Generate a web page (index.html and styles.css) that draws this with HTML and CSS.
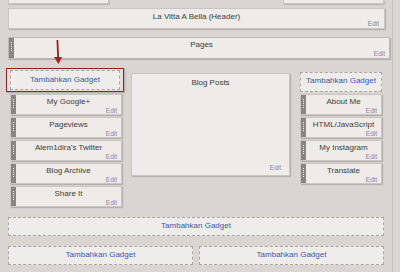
FILE: index.html
```html
<!DOCTYPE html>
<html lang="en">
<head>
    <meta charset="UTF-8">
    <title>Layout</title>
    <link rel="stylesheet" href="styles.css">
</head>
<body>
<div class="page">
    <div class="top-row">
        <div class="stub"></div>
        <div class="stub"></div>
    </div>

    <div class="widget header">
        <div class="body">
            <span class="label">La Vitta A Bella (Header)</span>
            <span class="edit">Edit</span>
        </div>
    </div>

    <div class="widget pages">
        <div class="grip"></div>
        <div class="body">
            <span class="label">Pages</span>
            <span class="edit">Edit</span>
        </div>
    </div>

    <div class="main">
        <div class="col left">
            <div class="picked">
                <div class="add">Tambahkan Gadget</div>
            </div>
            <div class="widget side"><div class="grip"></div><div class="body"><span class="label">My Google+</span><span class="edit">Edit</span></div></div>
            <div class="widget side"><div class="grip"></div><div class="body"><span class="label">Pageviews</span><span class="edit">Edit</span></div></div>
            <div class="widget side"><div class="grip"></div><div class="body"><span class="label">Alem1dira's Twitter</span><span class="edit">Edit</span></div></div>
            <div class="widget side"><div class="grip"></div><div class="body"><span class="label">Blog Archive</span><span class="edit">Edit</span></div></div>
            <div class="widget side"><div class="grip"></div><div class="body"><span class="label">Share It</span><span class="edit">Edit</span></div></div>
        </div>

        <div class="col center">
            <div class="widget posts">
                <div class="body">
                    <span class="label">Blog Posts</span>
                    <span class="edit">Edit</span>
                </div>
            </div>
        </div>

        <div class="col right">
            <div class="add">Tambahkan Gadget</div>
            <div class="widget side"><div class="grip"></div><div class="body"><span class="label">About Me</span><span class="edit">Edit</span></div></div>
            <div class="widget side"><div class="grip"></div><div class="body"><span class="label">HTML/JavaScript</span><span class="edit">Edit</span></div></div>
            <div class="widget side"><div class="grip"></div><div class="body"><span class="label">My Instagram</span><span class="edit">Edit</span></div></div>
            <div class="widget side"><div class="grip"></div><div class="body"><span class="label">Translate</span><span class="edit">Edit</span></div></div>
        </div>
    </div>

    <div class="add wide">Tambahkan Gadget</div>

    <div class="halves">
        <div class="add">Tambahkan Gadget</div>
        <div class="add">Tambahkan Gadget</div>
    </div>

    <!-- panah merah -->
    <svg class="arrow" width="14" height="26" viewBox="0 0 14 26">
        <path d="M6.4 0 L7.2 19" stroke="#a81c1c" stroke-width="1.8" fill="none"/>
        <path d="M3 17 L11 17 L7.5 24 Z" fill="#a81c1c"/>
    </svg>
</div>
</body>
</html>
```

FILE: styles.css
```css
html,
body{
    margin:0;
    background:#d9d5d1;
    font-family:'Liberation Sans', Arial, sans-serif;
    color:#3a3a3a;
}

.page{
    position:relative;
    width:392px;
    height:272px;
    border-right:1px solid #c4c0bc;
    overflow:hidden;
}

/* baris atas */
.top-row{
    display:flex;
    justify-content:space-between;
    padding:0 8px 0 8px;
    width:376px;
}
.stub{
    width:99px;
    height:3px;
    background:#eeebe8;
    border:1px solid #c6c2be;
    border-top:none;
    box-shadow:1px 1px 1px #b9b5b0;
}

/* widget umum */
.widget{
    display:flex;
    background:#eeebe8;
    border:1px solid #c9c5c1;
    box-shadow:1px 1px 1px #b5b1ac;
}
.widget .body{
    flex:1;
    position:relative;
    text-align:center;
}
.label{
    display:block;
    font-size:8px;
    line-height:9px;
    padding-top:2px;
    color:#3c3c3c;
}
.edit{
    position:absolute;
    right:5px;
    bottom:1px;
    font-size:6.5px;
    line-height:7px;
    color:#7d89ad;
}
.grip{
    position:relative;
    width:5px;
    background:#8a8580;
}
.grip::after{
    content:'';
    position:absolute;
    left:2px;
    top:4px;
    height:9px;
    border-left:1px dotted #efece9;
}

.header{
    margin:4px 0 0 8px;
    width:375px;
    height:19px;
}
.header .label{
    padding-top:3px;
}

.pages{
    margin:8px 0 0 8px;
    width:380px;
    height:20px;
    border-color:#bcb8b4;
}
.pages .edit{
    right:4px;
}

/* tiga kolom */
.main{
    display:flex;
    margin-top:9px;
    padding-left:6px;
}
.col{
    display:flex;
    flex-direction:column;
    gap:2px;
}
.left{
    width:118px;
}
.left .side{
    margin:0 2px 0 4px;
}
.center{
    width:159px;
    margin-left:7px;
    padding-top:5px;
}
.right{
    width:82px;
    margin-left:10px;
    padding-top:4px;
}
.side{
    height:19px;
}
.side .edit{
    right:4px;
    bottom:0;
}
.posts{
    height:101px;
}
.posts .label{
    padding-top:4px;
}
.posts .edit{
    right:8px;
    bottom:4px;
}

/* tambah gadget */
.add{
    background:#efedeb;
    border:1px dashed #a9a6a2;
    color:#3b58a3;
    font-size:8px;
    line-height:9px;
    text-align:center;
    padding-top:3px;
    height:15px;
    box-sizing:content-box;
}
.picked{
    border:1.5px solid #9a1f22;
    padding:1px 3px;
    background:#e4e1dd;
    box-shadow:1px 1px 2px #a9a5a0;
}
.picked .add{
    height:14px;
    padding-top:4px;
}

.wide{
    margin:10px 0 0 8px;
    width:374px;
    height:14px;
    padding-top:3px;
}

.halves{
    display:flex;
    gap:6px;
    margin:10px 0 0 8px;
    width:376px;
}
.halves .add{
    flex:1;
    height:14px;
}

.arrow{
    position:absolute;
    left:51px;
    top:40px;
}
```
